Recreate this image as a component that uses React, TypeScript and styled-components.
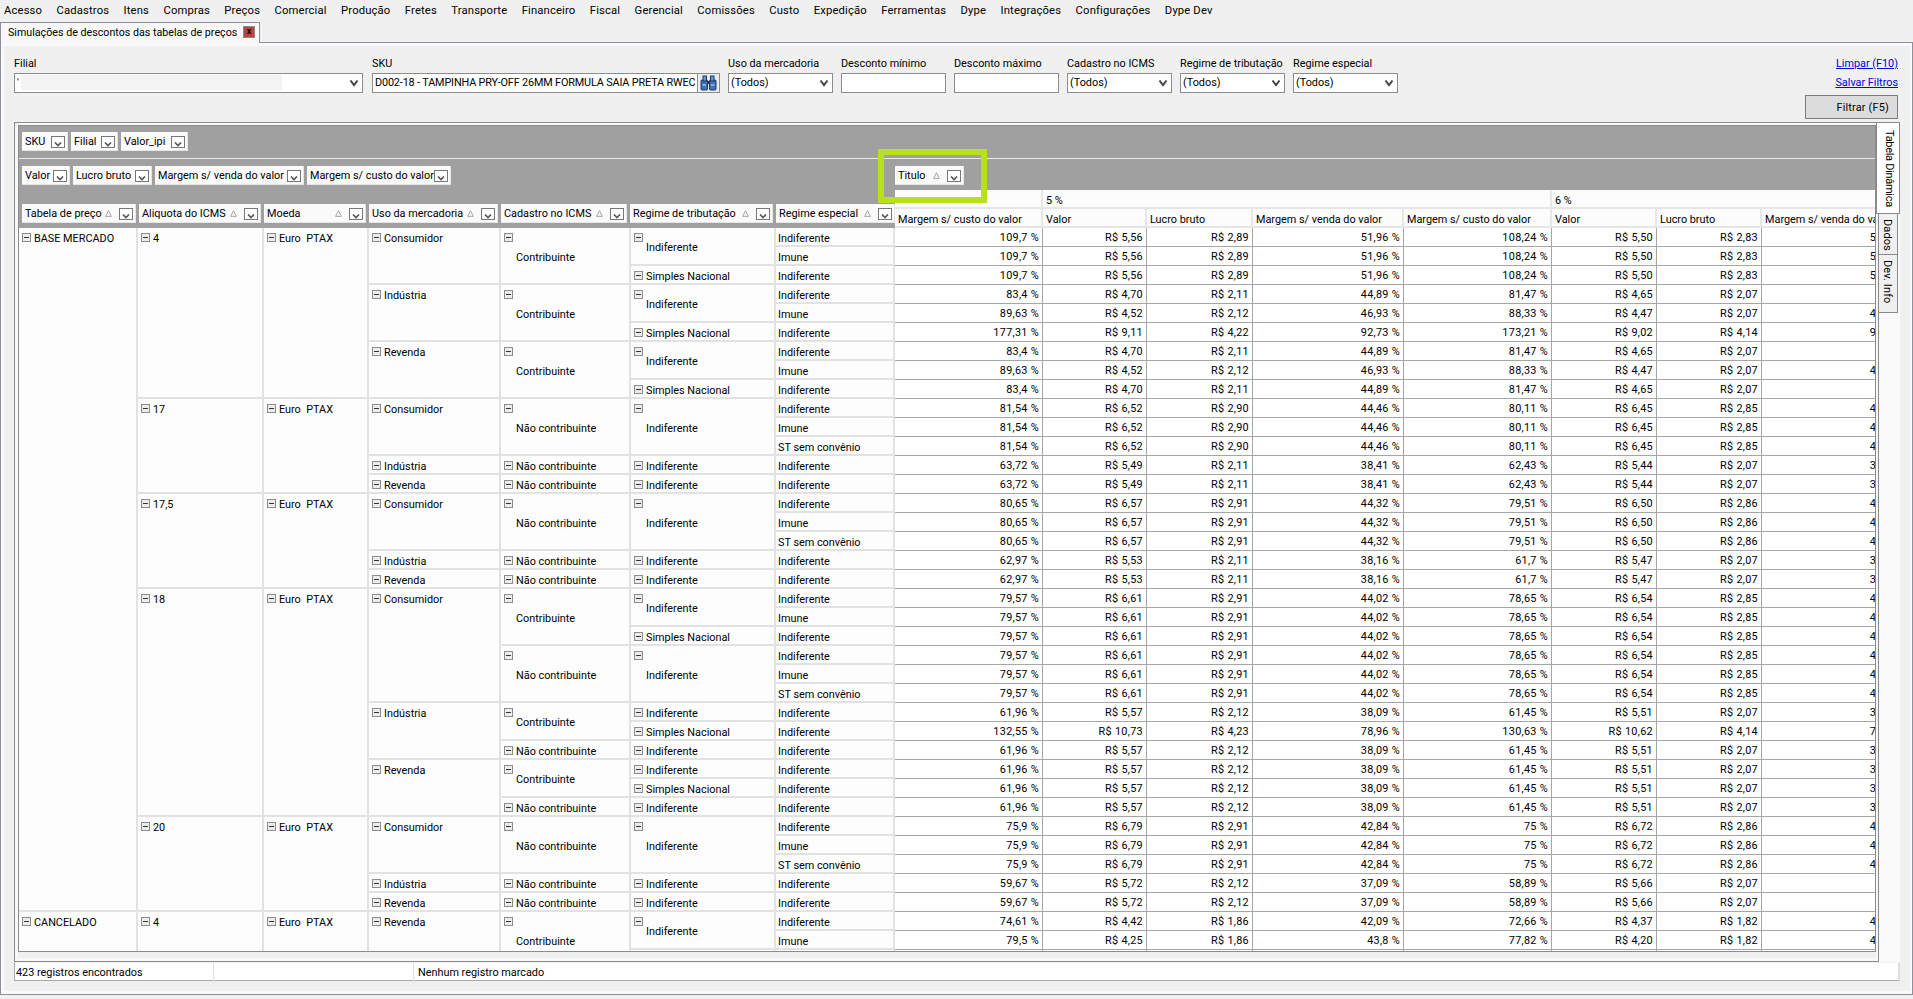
import styled, { createGlobalStyle } from "styled-components";

const GlobalStyle = createGlobalStyle`
  html, body {
    margin: 0;
    padding: 0;
    background: #f0f0f0;
  }
  body {
    font-family: Roboto, "Liberation Sans", sans-serif;
    font-size: 10.85px;
    color: #000;
  }
`;

type Values = string[];
type TreeNode = { label: string; kids?: TreeNode[]; values?: Values };

const A = ["109,7", "5,56", "2,89", "51,96", "108,24", "5,50", "2,83", "50,96"];
const B = ["83,4", "4,70", "2,11", "44,89", "81,47", "4,65", "2,07", "44,5"];
const C = ["89,63", "4,52", "2,12", "46,93", "88,33", "4,47", "2,07", "46,31"];
const D = ["177,31", "9,11", "4,22", "92,73", "173,21", "9,02", "4,14", "91,87"];
const E = ["81,54", "6,52", "2,90", "44,46", "80,11", "6,45", "2,85", "44,16"];
const F = ["63,72", "5,49", "2,11", "38,41", "62,43", "5,44", "2,07", "38,06"];
const G = ["80,65", "6,57", "2,91", "44,32", "79,51", "6,50", "2,86", "44,03"];
const H = ["62,97", "5,53", "2,11", "38,16", "61,7", "5,47", "2,07", "37,85"];
const I = ["79,57", "6,61", "2,91", "44,02", "78,65", "6,54", "2,85", "43,71"];
const J = ["61,96", "5,57", "2,12", "38,09", "61,45", "5,51", "2,07", "37,66"];
const K = ["132,55", "10,73", "4,23", "78,96", "130,63", "10,62", "4,14", "78,02"];
const L = ["75,9", "6,79", "2,91", "42,84", "75", "6,72", "2,86", "42,55"];
const M = ["59,67", "5,72", "2,12", "37,09", "58,89", "5,66", "2,07", "36,6"];
const N = ["74,61", "4,42", "1,86", "42,09", "72,66", "4,37", "1,82", "41,65"];
const O = ["79,5", "4,25", "1,86", "43,8", "77,82", "4,20", "1,82", "43,33"];

const leaf = (label: string, values: Values): TreeNode => ({ label, values });
const node = (label: string, ...kids: TreeNode[]): TreeNode => ({ label, kids });

const contrib = (a: Values, b: Values, c: Values) =>
  node(
    "Contribuinte",
    node("Indiferente", leaf("Indiferente", a), leaf("Imune", b)),
    node("Simples Nacional", leaf("Indiferente", c))
  );
const contribShort = (a: Values, b: Values) =>
  node(
    "Contribuinte",
    node("Indiferente", leaf("Indiferente", a)),
    node("Simples Nacional", leaf("Indiferente", b))
  );
const naoST = (a: Values) =>
  node(
    "Não contribuinte",
    node("Indiferente", leaf("Indiferente", a), leaf("Imune", a), leaf("ST sem convênio", a))
  );
const nao = (a: Values) => node("Não contribuinte", node("Indiferente", leaf("Indiferente", a)));

const EURO = "Euro\u00a0 PTAX";

const tree: TreeNode[] = [
  node(
    "BASE MERCADO",
    node(
      "4",
      node(
        EURO,
        node("Consumidor", contrib(A, A, A)),
        node("Indústria", contrib(B, C, D)),
        node("Revenda", contrib(B, C, B))
      )
    ),
    node(
      "17",
      node(EURO, node("Consumidor", naoST(E)), node("Indústria", nao(F)), node("Revenda", nao(F)))
    ),
    node(
      "17,5",
      node(EURO, node("Consumidor", naoST(G)), node("Indústria", nao(H)), node("Revenda", nao(H)))
    ),
    node(
      "18",
      node(
        EURO,
        node("Consumidor", contrib(I, I, I), naoST(I)),
        node("Indústria", contribShort(J, K), nao(J)),
        node("Revenda", contribShort(J, J), nao(J))
      )
    ),
    node(
      "20",
      node(EURO, node("Consumidor", naoST(L)), node("Indústria", nao(M)), node("Revenda", nao(M)))
    )
  ),
  node(
    "CANCELADO",
    node("4", node(EURO, node("Revenda", contrib(N, O, O))))
  ),
];

type Placed = { label: string; depth: number; span: number };
type Row = { heads: Placed[]; leaf: string; values: Values };

const countLeaves = (n: TreeNode): number =>
  n.kids ? n.kids.reduce((sum, k) => sum + countLeaves(k), 0) : 1;

const flatten = (nodes: TreeNode[], depth: number, pending: Placed[], out: Row[]) => {
  nodes.forEach((n, i) => {
    const carried = i === 0 ? pending : [];
    if (n.kids) {
      flatten(n.kids, depth + 1, [...carried, { label: n.label, depth, span: countLeaves(n) }], out);
    } else {
      out.push({ heads: carried, leaf: n.label, values: n.values as Values });
    }
  });
};

const rows: Row[] = [];
flatten(tree, 0, [], rows);

const HEAD_COLS = [119, 126, 105, 132, 130, 145, 119];
const VALUE_COLS = [148, 104, 106, 151, 148, 105, 105, 151];
const menus = [
  "Acesso", "Cadastros", "Itens", "Compras", "Preços", "Comercial", "Produção", "Fretes",
  "Transporte", "Financeiro", "Fiscal", "Gerencial", "Comissões", "Custo", "Expedição",
  "Ferramentas", "Dype", "Integrações", "Configurações", "Dype Dev",
];
const valueTitles = ["Margem s/ custo do valor", "Valor", "Lucro bruto", "Margem s/ venda do valor"];

const Screen = styled.div`
  width: 1913px;
  height: 999px;
  overflow: hidden;
  background: #f0f0f0;
`;
const MenuBar = styled.div`
  display: flex;
  height: 20px;
  align-items: center;
  padding-left: 4px;
  gap: 14.4px;
  font-size: 11.25px;
  letter-spacing: 0.15px;
`;
const TabStrip = styled.div`
  height: 22px;
  padding-top: 2px;
  box-sizing: border-box;
`;
const DocTab = styled.div`
  position: relative;
  z-index: 1;
  display: flex;
  align-items: center;
  width: 260px;
  height: 21px;
  box-sizing: border-box;
  padding: 0 0 2px 7px;
  background: #f8f8f8;
  border: 1px solid #8f8f9c;
  border-bottom: none;
  font-size: 10.7px;
`;
const CloseBox = styled.span`
  position: absolute;
  left: 242px;
  top: 3px;
  width: 12px;
  height: 12px;
  box-sizing: border-box;
  background: #b3463e;
  border: 1px solid #8a8a8a;
  color: #1a0000;
  font-size: 9px;
  font-weight: 700;
  line-height: 9px;
  text-align: center;
`;
const Page = styled.div`
  height: 953px;
  box-sizing: border-box;
  border: 1px solid #8f8f9c;
  padding: 3px 2px 3px 3px;
  background: #f9f9f9;
`;
const Content = styled.div`
  height: 100%;
  box-sizing: border-box;
  padding: 0 10px 0 10px;
  background: #f0f0f0;
`;
const TopArea = styled.div`
  display: flex;
  height: 76px;
`;
const Fields = styled.div`
  display: flex;
  gap: 8px;
  padding-top: 11px;
`;
const Field = styled.div<{ $w: number }>`
  width: ${(p) => p.$w}px;
  margin-right: ${(p) => (p.$w === 349 ? 1 : 0)}px;
`;
const Label = styled.div`
  height: 14px;
  line-height: 14px;
  margin-bottom: 2px;
  white-space: nowrap;
`;
const Box = styled.div`
  position: relative;
  display: flex;
  align-items: center;
  height: 20px;
  box-sizing: border-box;
  padding: 0 0 1px 2px;
  background: #fff;
  border: 1px solid #8c8c8c;
  white-space: nowrap;
  overflow: hidden;
`;
const Chevron = styled.svg`
  position: absolute;
  right: 3px;
  top: 5px;
`;
const Redacted = styled.span`
  width: 261px;
  height: 15px;
  margin-left: 2px;
  background: #f3f3f3;
`;
const SkuText = styled.span`
  width: 323px;
  overflow: hidden;
  letter-spacing: -0.15px;
`;
const FindButton = styled.span`
  position: absolute;
  right: 0;
  top: 0;
  bottom: 0;
  width: 21px;
  display: flex;
  align-items: center;
  justify-content: center;
  background: #e9edf3;
  border-left: 1px solid #8c8c8c;
`;
const Actions = styled.div`
  margin-left: auto;
  margin-right: 2px;
  padding-top: 8px;
  display: flex;
  flex-direction: column;
  align-items: flex-end;
`;
const LinkText = styled.a`
  height: 19px;
  line-height: 19px;
  color: #0000e6;
  text-decoration: underline;
`;
const FilterButton = styled.div`
  width: 93px;
  height: 24px;
  margin-top: 3px;
  box-sizing: border-box;
  padding-right: 8px;
  background: #dcdcdc;
  border: 1px solid #7d7d7d;
  line-height: 24px;
  text-align: right;
  letter-spacing: 0.2px;
`;
const TabBox = styled.div`
  display: flex;
  height: 840px;
`;
const Pane = styled.div`
  width: 1865px;
  box-sizing: border-box;
  border: 1px solid #8a8a8a;
  padding: 2px 2px 0 3px;
  background: #f8f8f8;
`;
const Pivot = styled.div`
  position: relative;
  width: 1858px;
  height: 827px;
  box-sizing: border-box;
  border: 1px solid #8a8a92;
  background: #a0a0a0;
  overflow: hidden;
`;
const ScrollStrip = styled.div`
  height: 6px;
  background: #f0f0f0;
`;
const FilterFields = styled.div`
  display: flex;
  gap: 3px;
  height: 33px;
  box-sizing: border-box;
  padding: 6px 0 0 3px;
  border-bottom: 1px solid #e9e9e9;
`;
const PivotHead = styled.div`
  display: grid;
  grid-template-columns: 876px 1fr;
  grid-template-rows: 31px 38px;
  height: 69px;
`;
const ChipRow = styled.div<{ $top: number }>`
  display: flex;
  gap: 3px;
  padding: ${(p) => p.$top}px 0 0 3px;
`;
const TitleSlot = styled.div`
  padding-top: 7px;
`;
const ChipBox = styled.div<{ $w: number }>`
  display: flex;
  align-items: center;
  flex: none;
  width: ${(p) => p.$w}px;
  height: 19px;
  box-sizing: border-box;
  padding: 0 3px;
  background: #fafafa;
  box-shadow: inset -1px -1px 0 #e6e6e6;
`;
const ChipLabel = styled.span`
  flex: 1;
  min-width: 0;
  padding-top: 1px;
  overflow: hidden;
  white-space: nowrap;
  line-height: 18px;
`;
const SortMark = styled.svg`
  flex: none;
  margin: 0 7px 0 2px;
`;
const DropBox = styled.span`
  flex: none;
  display: flex;
  align-items: flex-end;
  justify-content: center;
  width: 14px;
  height: 12px;
  box-sizing: border-box;
  margin-top: 1px;
  background: #fff;
  border: 1px solid #777;
`;
const HighlightFrame = styled.div`
  position: absolute;
  left: 859px;
  top: 23px;
  width: 109px;
  height: 54px;
  box-sizing: border-box;
  border: 6px solid #b6e11c;
  pointer-events: none;
`;
const ColumnHead = styled.div`
  overflow: hidden;
`;
const Grid = styled.table<{ $w: number }>`
  table-layout: fixed;
  border-collapse: separate;
  border-spacing: 0;
  width: ${(p) => p.$w}px;
`;
const HeadCell = styled.td`
  height: 19px;
  padding: 2px 0 0 3px;
  box-sizing: border-box;
  overflow: hidden;
  white-space: nowrap;
  line-height: 17px;
  background: #fcfcfc;
  box-shadow: inset -2px -2px 0 #e6e6e6;
`;
const GridArea = styled.div`
  height: 724px;
  overflow: hidden;
`;
const TreeCell = styled.td<{ $center?: boolean; $leaf?: boolean }>`
  position: relative;
  height: 19px;
  padding: ${(p) => (p.$leaf ? "2px 0 0 2px" : p.$center ? "1px 0 0 15px" : "2px 0 0 3px")};
  box-sizing: border-box;
  overflow: hidden;
  white-space: nowrap;
  line-height: 17px;
  vertical-align: ${(p) => (p.$center ? "middle" : "top")};
  background: #fdfdfd;
  box-shadow: inset -2px -2px 0 #e2e2e2;
`;
const NumberCell = styled.td`
  height: 19px;
  padding: 1px 4px 0 0;
  box-sizing: border-box;
  overflow: hidden;
  white-space: nowrap;
  line-height: 18px;
  text-align: right;
  letter-spacing: 0.3px;
  background: #fff;
  box-shadow: inset -1px -1px 0 #a6a6a6;
`;
const NodeLine = styled.span`
  display: flex;
  align-items: center;
  gap: 3px;
`;
const Expander = styled.span<{ $float?: boolean }>`
  position: ${(p) => (p.$float ? "absolute" : "relative")};
  left: ${(p) => (p.$float ? "3px" : "0")};
  top: ${(p) => (p.$float ? "5px" : "-1px")};
  flex: none;
  width: 9px;
  height: 9px;
  box-sizing: border-box;
  background: #ececec;
  border: 1px solid #8c8c8c;
  &::after {
    content: "";
    position: absolute;
    left: 1px;
    right: 1px;
    top: 3px;
    height: 1px;
    background: #333;
  }
`;
const Rail = styled.div`
  display: flex;
  flex-direction: column;
  width: 21px;
  background: #fafafa;
`;
const SideTab = styled.div<{ $active?: boolean; $h: number }>`
  position: relative;
  flex: none;
  height: ${(p) => p.$h}px;
  width: ${(p) => (p.$active ? 24 : 19)}px;
  margin-left: ${(p) => (p.$active ? -3 : 0)}px;
  box-sizing: border-box;
  padding-top: ${(p) => (p.$active ? 7 : 5)}px;
  background: ${(p) => (p.$active ? "#fff" : "#f0f0f0")};
  border: 1px solid #8a8a8a;
  border-left: ${(p) => (p.$active ? "1px solid #8a8a8a" : "none")};
  border-top: ${(p) => (p.$active ? "1px solid #8a8a8a" : "none")};
  writing-mode: vertical-rl;
  line-height: 20px;
  font-size: 11px;
  letter-spacing: ${(p) => (p.$active ? "-0.3px" : "0.1px")};
  white-space: nowrap;
`;
const StatusBar = styled.div`
  display: grid;
  grid-template-columns: 199px 200px 1fr;
  height: 18px;
  margin-top: 1px;
  box-sizing: border-box;
  background: #fff;
  border: 1px solid #a8a8a8;
  border-top: none;
  border-right-color: #dcdcdc;
  line-height: 20px;
`;
const StatusCell = styled.div<{ $pad: number }>`
  padding-left: ${(p) => p.$pad}px;
  border-right: 1px solid #e0e0e0;
  white-space: nowrap;
`;

const DownMark = () => (
  <Chevron width="10" height="8" viewBox="0 0 10 8">
    <path d="M1.5 1.5 L5 6 L8.5 1.5" fill="none" stroke="#444" strokeWidth="2" />
  </Chevron>
);

const Binoculars = () => (
  <svg width="17" height="16" viewBox="0 0 17 16">
    <rect x="1" y="5" width="6.5" height="10" rx="1" fill="#3f72b5" stroke="#1d3767" strokeWidth="1" />
    <rect x="9.5" y="5" width="6.5" height="10" rx="1" fill="#3f72b5" stroke="#1d3767" strokeWidth="1" />
    <rect x="3" y="1" width="3.5" height="5" fill="#6c97cf" stroke="#1d3767" strokeWidth="1" />
    <rect x="10.5" y="1" width="3.5" height="5" fill="#6c97cf" stroke="#1d3767" strokeWidth="1" />
    <rect x="7" y="6" width="3" height="3" fill="#1d3767" />
    <path d="M2.5 10h3.5M11 10h3.5" stroke="#d5e3f5" strokeWidth="1" />
  </svg>
);

const Chip = ({ w, label, sort }: { w: number; label: string; sort?: boolean }) => (
  <ChipBox $w={w}>
    <ChipLabel>{label}</ChipLabel>
    {sort && (
      <SortMark width="7" height="7" viewBox="0 0 7 7">
        <path d="M3.5 0.7 L6.4 6.4 H0.6 Z" fill="#f4f4f4" stroke="#a9a9a9" strokeWidth="1" />
      </SortMark>
    )}
    <DropBox>
      <svg width="8" height="5" viewBox="0 0 8 5">
        <path d="M1 0.5 L4 3.5 L7 0.5" fill="none" stroke="#555" strokeWidth="1.6" />
      </svg>
    </DropBox>
  </ChipBox>
);

const Select = ({ text }: { text: string }) => (
  <Box>
    {text}
    <DownMark />
  </Box>
);

const renderHead = (cell: Placed) => {
  const center = cell.depth >= 4 && cell.span > 1;
  return (
    <TreeCell key={cell.depth} rowSpan={cell.span} $center={center}>
      {center ? (
        <>
          <Expander $float />
          {cell.label}
        </>
      ) : (
        <NodeLine>
          <Expander />
          {cell.label}
        </NodeLine>
      )}
    </TreeCell>
  );
};

const formatValue = (v: string, i: number) => (i % 4 === 1 || i % 4 === 2 ? `R$ ${v}` : `${v} %`);

const Cols = ({ widths }: { widths: number[] }) => (
  <colgroup>
    {widths.map((w, i) => (
      <col key={i} style={{ width: w }} />
    ))}
  </colgroup>
);

const sum = (list: number[]) => list.reduce((a, b) => a + b, 0);

export default function App() {
  return (
    <Screen>
      <GlobalStyle />
      <MenuBar>
        {menus.map((m) => (
          <span key={m}>{m}</span>
        ))}
      </MenuBar>
      <TabStrip>
        <DocTab>
          Simulações de descontos das tabelas de preços
          <CloseBox>x</CloseBox>
        </DocTab>
      </TabStrip>
      <Page>
        <Content>
          <TopArea>
            <Fields>
              <Field $w={349}>
                <Label>Filial</Label>
                <Box>
                  '
                  <Redacted />
                  <DownMark />
                </Box>
              </Field>
              <Field $w={348}>
                <Label>SKU</Label>
                <Box>
                  <SkuText>D002-18 - TAMPINHA PRY-OFF 26MM FORMULA SAIA PRETA RWEC</SkuText>
                  <FindButton>
                    <Binoculars />
                  </FindButton>
                </Box>
              </Field>
              <Field $w={105}>
                <Label>Uso da mercadoria</Label>
                <Select text="(Todos)" />
              </Field>
              <Field $w={105}>
                <Label>Desconto mínimo</Label>
                <Box />
              </Field>
              <Field $w={105}>
                <Label>Desconto máximo</Label>
                <Box />
              </Field>
              <Field $w={105}>
                <Label>Cadastro no ICMS</Label>
                <Select text="(Todos)" />
              </Field>
              <Field $w={105}>
                <Label>Regime de tributação</Label>
                <Select text="(Todos)" />
              </Field>
              <Field $w={105}>
                <Label>Regime especial</Label>
                <Select text="(Todos)" />
              </Field>
            </Fields>
            <Actions>
              <LinkText>Limpar (F10)</LinkText>
              <LinkText>Salvar Filtros</LinkText>
              <FilterButton>Filtrar (F5)</FilterButton>
            </Actions>
          </TopArea>
          <TabBox>
            <Pane>
              <Pivot>
                <FilterFields>
                  <Chip w={46} label="SKU" />
                  <Chip w={47} label="Filial" />
                  <Chip w={67} label="Valor_ipi" />
                </FilterFields>
                <PivotHead>
                  <ChipRow $top={7}>
                    <Chip w={48} label="Valor" />
                    <Chip w={79} label="Lucro bruto" />
                    <Chip w={149} label="Margem s/ venda do valor" />
                    <Chip w={144} label="Margem s/ custo do valor" />
                  </ChipRow>
                  <TitleSlot>
                    <Chip w={69} label="Titulo" sort />
                  </TitleSlot>
                  <ChipRow $top={14}>
                    <Chip w={114} label="Tabela de preço" sort />
                    <Chip w={122} label="Aliquota do ICMS" sort />
                    <Chip w={102} label="Moeda" sort />
                    <Chip w={129} label="Uso da mercadoria" sort />
                    <Chip w={126} label="Cadastro no ICMS" sort />
                    <Chip w={143} label="Regime de tributação" sort />
                    <Chip w={119} label="Regime especial" sort />
                  </ChipRow>
                  <ColumnHead>
                    <Grid $w={sum(VALUE_COLS)}>
                      <Cols widths={VALUE_COLS} />
                      <tbody>
                        <tr>
                          <HeadCell />
                          <HeadCell colSpan={4}>5 %</HeadCell>
                          <HeadCell colSpan={3}>6 %</HeadCell>
                        </tr>
                        <tr>
                          {[...valueTitles, ...valueTitles].map((t, i) => (
                            <HeadCell key={i}>{t}</HeadCell>
                          ))}
                        </tr>
                      </tbody>
                    </Grid>
                  </ColumnHead>
                </PivotHead>
                <GridArea>
                  <Grid $w={sum(HEAD_COLS) + sum(VALUE_COLS)}>
                    <Cols widths={[...HEAD_COLS, ...VALUE_COLS]} />
                    <tbody>
                      {rows.map((row, r) => (
                        <tr key={r}>
                          {row.heads.map(renderHead)}
                          <TreeCell $leaf>{row.leaf}</TreeCell>
                          {row.values.map((v, i) => (
                            <NumberCell key={i}>{formatValue(v, i)}</NumberCell>
                          ))}
                        </tr>
                      ))}
                    </tbody>
                  </Grid>
                </GridArea>
                <HighlightFrame />
              </Pivot>
              <ScrollStrip />
            </Pane>
            <Rail>
              <SideTab $active $h={92}>Tabela Dinâmica</SideTab>
              <SideTab $h={41}>Dados</SideTab>
              <SideTab $h={58}>Dev. Info</SideTab>
            </Rail>
          </TabBox>
          <StatusBar>
            <StatusCell $pad={1}>423 registros encontrados</StatusCell>
            <StatusCell $pad={4} />
            <StatusCell $pad={4}>Nenhum registro marcado</StatusCell>
          </StatusBar>
        </Content>
      </Page>
    </Screen>
  );
}
